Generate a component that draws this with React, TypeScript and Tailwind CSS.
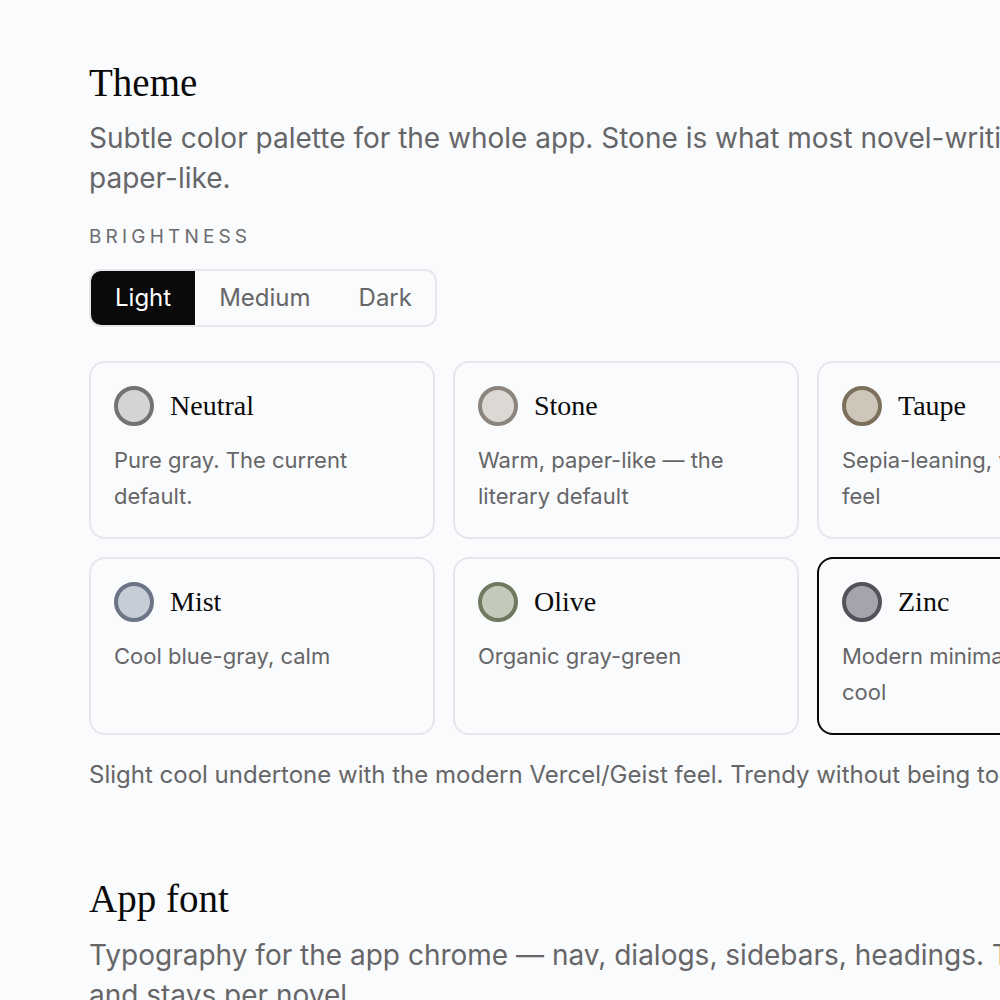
const sans = "font-['Inter','Liberation_Sans',sans-serif]";
const serif = "font-['Liberation_Serif','Times_New_Roman',serif]";

type Palette = {
  name: string;
  blurb: string;
  fill: string;
  ring: string;
};

// \n marks where the card copy breaks in the design
const palettes: Palette[] = [
  { name: "Neutral", blurb: "Pure gray. The current default.", fill: "bg-[#d4d4d4]", ring: "border-[#737373]" },
  { name: "Stone", blurb: "Warm, paper-like — the literary default", fill: "bg-[#dcd8d3]", ring: "border-[#8c857d]" },
  { name: "Taupe", blurb: "Sepia-leaning, warm, aged\nfeel", fill: "bg-[#cec6b8]", ring: "border-[#7c705d]" },
  { name: "Mist", blurb: "Cool blue-gray, calm", fill: "bg-[#c6cdd7]", ring: "border-[#6b7586]" },
  { name: "Olive", blurb: "Organic gray-green", fill: "bg-[#c3cab9]", ring: "border-[#6e7960]" },
  { name: "Zinc", blurb: "Modern minimal, slightly\ncool", fill: "bg-[#a4a4ad]", ring: "border-[#52525b]" }
];

const selected = "Zinc";

function PaletteCard({ palette }: { palette: Palette }) {
  const active = palette.name === selected;
  return (
    <div
      className={
        "h-[178px] rounded-[16px] border-2 bg-[#fafbfc] px-[23px] pt-[23px] " +
        (active ? "border-[#0a0a0a]" : "border-[#e6e7ea]")
      }
    >
      <div className="flex items-center gap-4">
        <span className={"h-10 w-10 shrink-0 rounded-full border-4 " + palette.fill + " " + palette.ring} />
        <span className={serif + " text-[28px] leading-10 text-[#0a0a0a]"}>{palette.name}</span>
      </div>
      <p className="mt-4 whitespace-pre-line text-[22px] leading-[36px] text-[#666668]">{palette.blurb}</p>
    </div>
  );
}

export default function App() {
  return (
    <div className={"h-screen overflow-hidden bg-[#fafbfc] " + sans}>
      <div className="ml-[89px] w-[1074px] pt-[59px]">
        <h2 className={serif + " text-[39px] leading-[48px] text-[#0a0a0a]"}>Theme</h2>
        <p className="mt-[11px] whitespace-pre text-[28px] leading-[40px] text-[#666668]">
          {"Subtle color palette for the whole app. Stone is what most novel-writing tools use — warm,\npaper-like."}
        </p>

        <div className="mt-[27px] text-[19px] leading-6 tracking-[0.22em] text-[#6b6b6e]">BRIGHTNESS</div>

        <div className="mt-5 inline-flex h-[58px] overflow-hidden rounded-[12px] border-2 border-[#e6e7ea]">
          <button className="bg-[#0a0a0a] px-[24px] text-[24px] text-white">Light</button>
          <button className="px-[24px] text-[24px] text-[#666668]">Medium</button>
          <button className="pl-[24px] pr-[23px] text-[24px] text-[#666668]">Dark</button>
        </div>

        <div className="mt-[34px] grid grid-cols-3 gap-[18px]">
          {palettes.map((p) => (
            <PaletteCard key={p.name} palette={p} />
          ))}
        </div>

        <p className="mt-[22px] whitespace-nowrap text-[24px] leading-[36px] text-[#666668]">
          Slight cool undertone with the modern Vercel/Geist feel. Trendy without being too cold.
        </p>

        <h2 className={serif + " mt-[82px] text-[39px] leading-[48px] text-[#0a0a0a]"}>App font</h2>
        <p className="mt-3 whitespace-pre text-[28px] leading-[40px] text-[#666668]">
          {"Typography for the app chrome — nav, dialogs, sidebars, headings. The editor font is separate\nand stays per novel."}
        </p>
      </div>
    </div>
  );
}
